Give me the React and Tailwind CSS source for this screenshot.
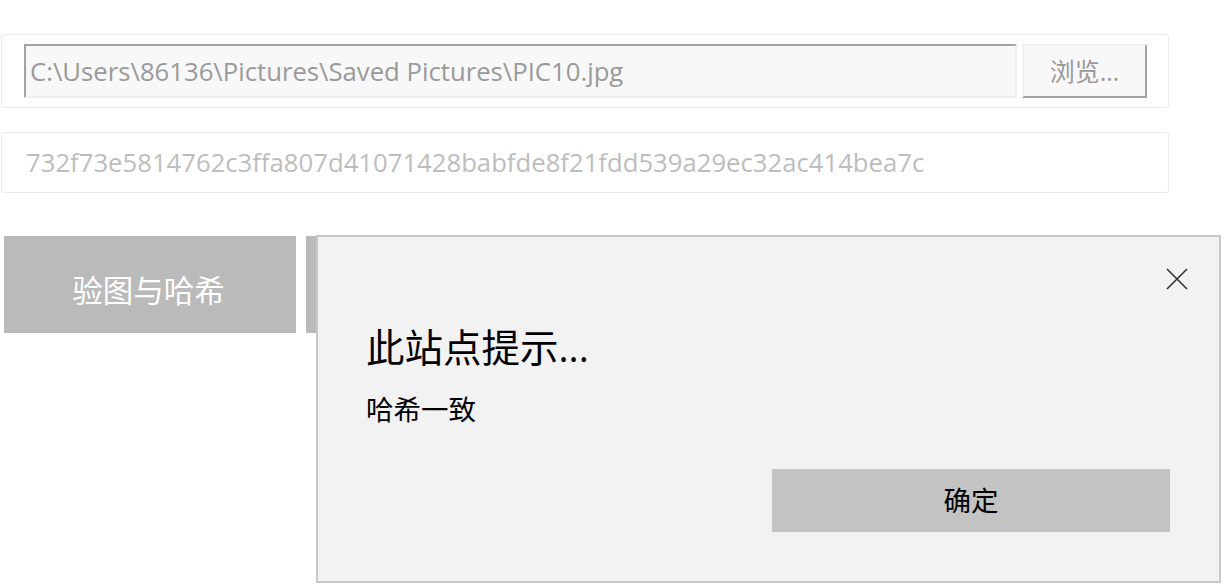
import React from "react";

const font = { fontFamily: '"Open Sans", "Noto Sans CJK SC", sans-serif' };

export default function App() {
  return (
    <div className="relative w-[1226px] h-[587px] bg-white overflow-hidden" style={font}>
      <div className="flex flex-col pt-[34px]">
        <div className="ml-[1px] w-[1168px] h-[74px] border border-[#ebebeb] rounded-[3px] flex items-center pl-[22px] pr-[21px]">
          <div className="w-[994px] h-[54px] bg-[#f8f8f8] border-t-2 border-l-2 border-[#a3a3a3] border-b-2 border-r-2 border-b-[#f0f0f0] border-r-[#f0f0f0] flex items-center pl-[4px] pt-[3px] text-[25.7px] text-[#9a9a9a] whitespace-nowrap">
            C:\Users\86136\Pictures\Saved Pictures\PIC10.jpg
          </div>
          <div className="ml-[5px] w-[125px] h-[54px] bg-[#f8f8f8] border-t-2 border-l-2 border-[#f0f0f0] border-b-2 border-r-2 border-b-[#a3a3a3] border-r-[#a3a3a3] flex items-center justify-center pt-[2px] text-[25px] text-[#9a9a9a]">
            浏览...
          </div>
        </div>
        <div className="mt-[24px] ml-[1px] w-[1168px] h-[61px] border border-[#ebebeb] rounded-[3px] flex items-center pl-[24px] pt-[2px] text-[25.7px] text-[#bdbdbd] whitespace-nowrap">
          732f73e5814762c3ffa807d41071428babfde8f21fdd539a29ec32ac414bea7c
        </div>
        <div className="mt-[43px] flex gap-[10px] pl-[4px]">
          <div className="w-[292px] h-[97px] bg-[#bababa] flex items-center justify-center pt-[12px] pr-[3px] text-[30.5px] text-white">
            验图与哈希
          </div>
          <div className="w-[292px] h-[97px] bg-[#bababa]" />
        </div>
      </div>

      <div className="absolute left-[316px] top-[235px] w-[905px] h-[348px] bg-[#f2f2f2] border-2 border-[#c8c8c8] flex flex-col">
        <button className="absolute right-[30px] top-[30px] w-[24px] h-[24px] flex items-center justify-center">
          <svg width="22" height="22" viewBox="0 0 22 22">
            <path d="M1 1 L21 21 M21 1 L1 21" stroke="#333" strokeWidth="1.6" fill="none" />
          </svg>
        </button>
        <div className="pl-[48px] pt-[90px] text-[38.5px] leading-[40px] text-black whitespace-nowrap">此站点提示...</div>
        <div className="pl-[48px] mt-[28px] text-[27.5px] leading-[30px] text-black">哈希一致</div>
        <div className="mt-[44px] flex justify-end pr-[49px]">
          <div className="w-[398px] h-[63px] bg-[#c3c3c3] flex items-center justify-center text-[27.5px] text-black">
            确定
          </div>
        </div>
      </div>
    </div>
  );
}
